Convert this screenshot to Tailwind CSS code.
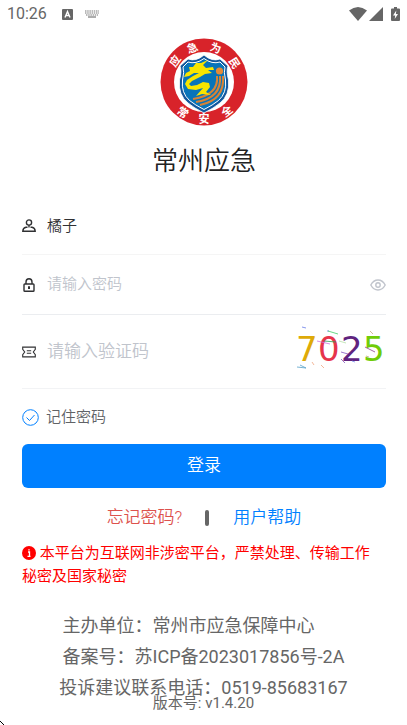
<!DOCTYPE html>
<html lang="zh-CN">
<head>
    <meta charset="UTF-8">
    <meta name="viewport" content="width=device-width, initial-scale=1.0">
    <title>常州应急</title>
    <script src="https://cdn.jsdelivr.net/npm/@tailwindcss/browser@4"></script>
</head>
<body class="relative min-h-screen bg-white text-[#606266] font-[Roboto,'Noto_Sans_CJK_SC',sans-serif]">
    <!-- Status bar -->
    <header class="flex h-7 items-center px-[7px]">
        <span class="text-base text-[#666]">10:26</span>
        <svg class="ml-[15px] size-[11px]" viewBox="0 0 11 11" aria-hidden="true">
            <rect width="11" height="11" rx="1" fill="#666"/>
            <path d="M3 8.5 5.5 2.5 8 8.5M4 6.5h3" fill="none" stroke="#fff" stroke-width="1.4"/>
        </svg>
        <svg class="ml-3 h-2 w-[14px]" viewBox="0 0 14 8" fill="none" stroke="#777" aria-hidden="true">
            <path d="M0 1h14M0 3h14M1 5h12" stroke-dasharray="1.5 .7" stroke-width="1.2"/>
            <path d="M3 7h8" stroke-width="1.2"/>
        </svg>
        <svg class="ml-auto h-[14px] w-[18px]" viewBox="0 0 18 14" aria-hidden="true">
            <path d="M0 3.5Q9-3.5 18 3.5L9 14Z" fill="#666"/>
        </svg>
        <svg class="ml-[2px] size-[14px]" viewBox="0 0 14 14" aria-hidden="true">
            <path d="M14 0V14H0Z" fill="#666"/>
        </svg>
        <svg class="ml-[8px] h-[14px] w-[9px]" viewBox="0 0 9 14" aria-hidden="true">
            <path d="M3 0h3v1.5h2a1 1 0 0 1 1 1V13a1 1 0 0 1-1 1H1a1 1 0 0 1-1-1V2.5a1 1 0 0 1 1-1h2Z" fill="#666"/>
            <path d="M5.3 3.5 2 8.5h2.2L3.7 12 7 7H4.9Z" fill="#fff"/>
        </svg>
    </header>

    <main class="pl-[22px] pr-[21px]">
        <div class="flex flex-col items-center pt-[10px]">
            <svg class="size-[88px]" viewBox="0 0 88 88" role="img" aria-label="应急为民 常安全">
                <circle cx="44" cy="44" r="43.5" fill="#d8232a"/>
                <circle cx="44" cy="44" r="30" fill="#fff"/>
                <!-- Shield -->
                <path d="M44 17Q52 24 60 21L68 28Q66 33 68.5 42Q70 57 60 65Q54 70 44 75Q34 70 28 65Q18 57 19.5 42Q22 33 20 28L28 21Q36 24 44 17Z" fill="#12579c" stroke="#fff" stroke-width=".8"/>
                <path d="M44 20.5Q52 26.5 60 24L65 29Q63.5 34 65.5 42Q67 55 58.5 62.5Q53 67 44 71.5Q35 67 29.5 62.5Q21 55 22.5 42Q24.500 34 23 29L28 24Q36 26.5 44 20.5Z" fill="#0874b9" stroke="#fff"/>
                <!-- Orange trails under the sun -->
                <g fill="none" stroke="#d78336" stroke-width="2">
                    <path d="M57 38Q59 57 33 61"/>
                    <path d="M60 38Q62 60 36 64"/>
                    <path d="M63 38Q65 62 40 67"/>
                </g>
                <circle cx="59.5" cy="33" r="3.6" fill="#e58a38"/>
                <!-- Dragon -->
                <path d="M24 39 26 35 30 33 29 29 33 29 36 25 41 25 48 22 43 27 46 30 53 29 54 32 48 32 52 35 45 36 40 39 32 43 29 46 31 48 37 47 43 44 49 45 50 49 46 54 51 57 42 56 36 58 43 50 36 52 28 51 25 46 27 42 33 38 39 35 34 35 29 38Z" fill="#f9e500"/>
                <g fill="#fff" font-family="Noto Sans CJK SC, sans-serif" font-size="11" font-weight="700" text-anchor="middle">
                    <text transform="translate(44 44) rotate(-54)" y="-32">应</text>
                    <text transform="translate(44 44) rotate(-19)" y="-32">急</text>
                    <text transform="translate(44 44) rotate(19)" y="-32">为</text>
                    <text transform="translate(44 44) rotate(58)" y="-32">民</text>
                    <text transform="translate(44 44) rotate(35)" y="41">常</text>
                    <text transform="translate(44 44)" y="41">安</text>
                    <text transform="translate(44 44) rotate(-38)" y="41">全</text>
                </g>
            </svg>
            <h1 class="mt-[17px] text-[26px] leading-9 font-[350] text-[#222]">常州应急</h1>
        </div>

        <form class="mt-[19px] font-[350]">
            <div class="flex h-[57px] items-center border-b border-[#f5f5f5]">
                <label for="username" aria-label="用户名">
                    <svg class="size-[14px]" viewBox="0 0 14 14" fill="none" stroke="#303133" stroke-width="1.4">
                        <circle cx="7" cy="3.5" r="2.6"/>
                        <path d="M7 6V8.5M5.5 8.3H4Q1 8.8.8 12.3H13.2Q13 8.8 10 8.3H8.5"/>
                    </svg>
                </label>
                <input id="username" type="text" value="橘子" class="ml-[11px] min-w-0 flex-1 text-[15px] text-[#303133] outline-none">
            </div>
            <div class="flex h-[60px] items-center border-b border-[#ebedf0]">
                <label for="password" aria-label="密码">
                    <svg class="size-[14px]" viewBox="0 0 14 14" fill="none" stroke="#303133" stroke-width="1.4">
                        <rect x="2" y="6" width="10" height="7.3" rx=".8"/>
                        <path d="M4 6V4Q4 .8 7 .8T10 4V6"/>
                        <path d="M7 8.3V11" stroke-width="2"/>
                    </svg>
                </label>
                <input id="password" type="password" placeholder="请输入密码" class="ml-[11px] min-w-0 flex-1 text-[15px] outline-none placeholder:text-[#c0c4cc]">
                <button type="button" aria-label="显示密码">
                    <svg class="h-3 w-4" viewBox="0 0 16 12" fill="none" stroke="#c0c4cc" stroke-width="1.4">
                        <path d="M.8 6Q3.5 1 8 1T15.2 6Q12.5 11 8 11T.8 6Z"/>
                        <circle cx="8" cy="6" r="2.2"/>
                    </svg>
                </button>
            </div>
            <div class="flex h-[74px] items-center border-b border-[#f2f3f5]">
                <label for="captcha" aria-label="验证码">
                    <svg class="size-[14px]" viewBox="0 0 14 14" fill="none" stroke="#303133" stroke-width="1.1">
                        <path d="M.7 2.1H13.3V4.4L11.3 7 13.3 9.6V11.9H.7V9.6L2.7 7 .7 4.4Z"/>
                        <path d="M4.8 5.7h4.4M4.8 8.3h4.4"/>
                    </svg>
                </label>
                <input id="captcha" type="text" placeholder="请输入验证码" class="ml-[11px] min-w-0 flex-1 text-[17px] outline-none placeholder:text-[#c0c4cc]">
                <svg class="h-[52px] w-[90px]" viewBox="0 0 90 52" role="img" aria-label="7025">
                    <g font-family="DejaVu Sans, sans-serif" font-size="34" font-weight="400">
                        <text x="0" y="35" fill="#deaa08">7</text>
                        <text x="22" y="35" fill="#e6344b">0</text>
                        <text x="45" y="35" fill="#60237e">2</text>
                        <text x="67" y="35" fill="#70cc08">5</text>
                    </g>
                    <g fill="none" stroke-width=".8">
                        <path d="M6 1l4 1M32 4v2" stroke="#6a7ee8"/>
                        <path d="M32 5l10 3" stroke="#43ce68"/>
                        <path d="M21 15l13 3" stroke="#ce70dc"/>
                        <path d="M28 15l12 1" stroke="#299d57"/>
                        <path d="M43 15l7 2" stroke="#b6dfaa"/>
                        <path d="M74 5l3 3M70 30l3 1" stroke="#c5a77a"/>
                        <path d="M69 21l10 5" stroke="#8b3c88"/>
                        <path d="M45 26l7 2M45 33l4 4" stroke="#8456bf"/>
                        <path d="M56 35l3 1" stroke="#7790ef"/>
                        <path d="M1 41l9 1M4 39l6 3" stroke="#57a1c9"/>
                        <path d="M16 36l2 3M25 39l3 3" stroke="#f0a47f"/>
                    </g>
                </svg>
            </div>

            <label class="mt-4 flex h-6 w-fit items-center text-[15px]">
                <input type="checkbox" checked class="sr-only">
                <svg class="mr-[7px] size-[17px]" viewBox="0 0 17 17" fill="none" stroke="#0080ff" aria-hidden="true">
                    <circle cx="8.5" cy="8.5" r="7.8"/>
                    <path d="M4.5 8.5 7.5 11.5 12.5 6"/>
                </svg>
                记住密码
            </label>

            <button type="submit" class="mt-[15px] h-11 w-full rounded-md bg-[#0080ff] text-[17px] text-white">登录</button>
        </form>

        <div class="mt-4 flex h-7 items-center justify-center text-[17px] font-[350]">
            <a href="#" class="text-[#dd524d]">忘记密码?</a>
            <span class="ml-[23px] mr-6 h-4 w-1 rounded-xs bg-[#666]"></span>
            <a href="#" class="text-[#0080ff]">用户帮助</a>
        </div>

        <p class="mt-[10px] pr-2 text-[15px] leading-[23px] text-[#f00]">
            <svg class="inline-block size-[14px] align-[-2px]" viewBox="0 0 14 14" aria-hidden="true">
                <circle cx="7" cy="7" r="7" fill="#f00"/>
                <path d="M6 6h1.5v4M5.5 10.3h3M6.3 3.8h1.4" fill="none" stroke="#fff" stroke-width="1.3"/>
            </svg>
            本平台为互联网非涉密平台，严禁处理、传输工作秘密及国家秘密
        </p>
    </main>

    <footer class="mt-[22px] flex flex-col items-center text-lg leading-[31px] text-[#666]">
        <div>
            <p>主办单位：常州市应急保障中心</p>
            <p>备案号：苏ICP备2023017856号-2A</p>
        </div>
        <p>投诉建议联系电话：0519-85683167</p>
    </footer>
    <p class="absolute inset-x-0 bottom-3 text-center text-[15px] leading-5 text-[#666]">版本号: v1.4.20</p>

    <svg class="absolute bottom-0 left-0 h-[5px] w-1" viewBox="0 0 4 5" aria-hidden="true">
        <path d="M0 1 4 5" stroke="#000"/>
    </svg>
</body>
</html>
